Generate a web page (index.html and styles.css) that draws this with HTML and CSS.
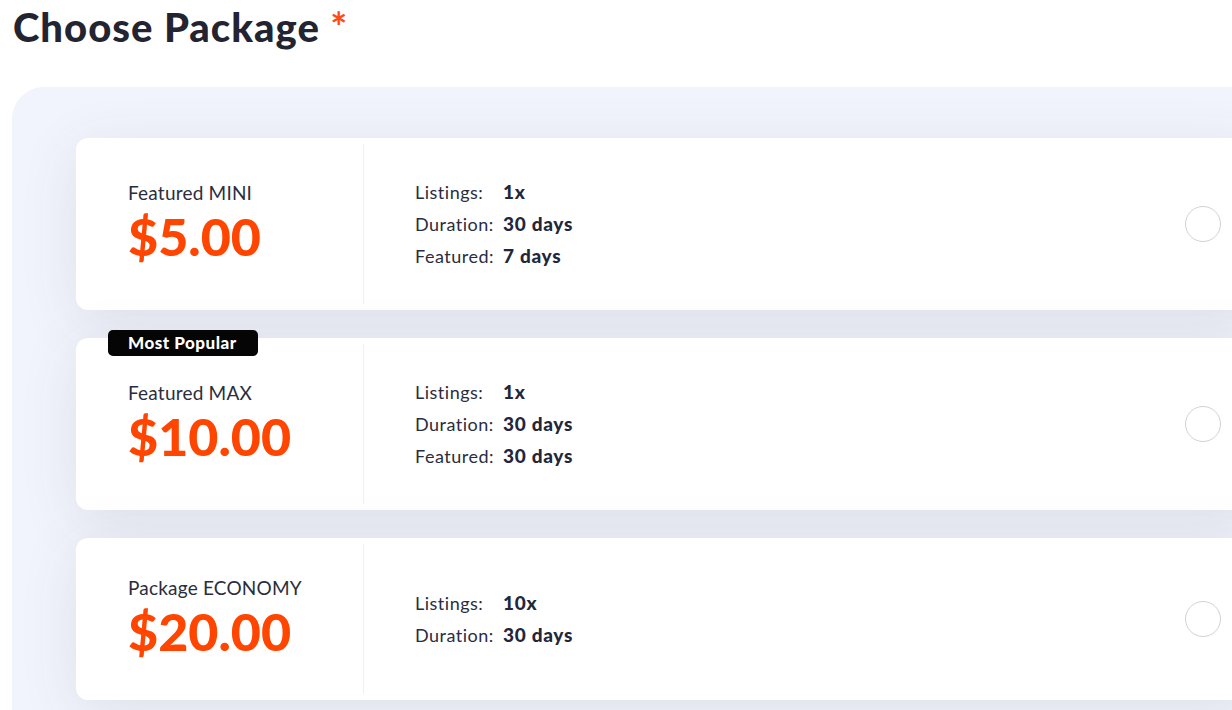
FILE: index.html
```html
<!DOCTYPE html>
<html>
<head>
<meta charset="utf-8">
<link rel="stylesheet" href="styles.css">
</head>
<body>
<h1 class="title">Choose Package <span class="req">*</span></h1>
<div class="packages">
  <div class="card">
    <div class="info">
      <div class="name">Featured MINI</div>
      <div class="price">$5.00</div>
    </div>
    <div class="details">
      <div class="label">Listings:</div><div class="value">1x</div>
      <div class="label">Duration:</div><div class="value">30 days</div>
      <div class="label">Featured:</div><div class="value">7 days</div>
    </div>
    <div class="radio"></div>
  </div>
  <div class="card">
    <div class="badge">Most Popular</div>
    <div class="info">
      <div class="name">Featured MAX</div>
      <div class="price">$10.00</div>
    </div>
    <div class="details">
      <div class="label">Listings:</div><div class="value">1x</div>
      <div class="label">Duration:</div><div class="value">30 days</div>
      <div class="label">Featured:</div><div class="value">30 days</div>
    </div>
    <div class="radio"></div>
  </div>
  <div class="card">
    <div class="info">
      <div class="name">Package ECONOMY</div>
      <div class="price">$20.00</div>
    </div>
    <div class="details">
      <div class="label">Listings:</div><div class="value">10x</div>
      <div class="label">Duration:</div><div class="value">30 days</div>
    </div>
    <div class="radio"></div>
  </div>
</div>
</body>
</html>
```
FILE: styles.css
```css
html, body {
  margin: 0;
  padding: 0;
  background: #ffffff;
  overflow: hidden;
  height: 710px;
}
body {
  font-family: Lato, "Noto Sans", sans-serif;
  color: #23263a;
}
.title {
  margin: 0;
  padding: 4px 0 0 13px;
  font-size: 40px;
  line-height: 46px;
  font-weight: 900;
  letter-spacing: 1px;
  color: #222531;
  height: 87px;
  box-sizing: border-box;
}
.req {
  color: #ff4a12;
  font-weight: 700;
  letter-spacing: 0;
}
.packages {
  margin-left: 12px;
  width: 1300px;
  box-sizing: border-box;
  padding: 51px 52px 40px 64px;
  background: #f1f4fc;
  border-radius: 32px;
  display: flex;
  flex-direction: column;
  gap: 28px;
  min-height: 700px;
}
.card {
  position: relative;
  display: flex;
  align-items: stretch;
  background: #ffffff;
  border-radius: 12px;
  padding: 6px 0;
  box-shadow: 0 12px 60px rgba(70, 70, 80, 0.11);
}
.info {
  width: 288px;
  box-sizing: border-box;
  padding: 32px 0 32px 52px;
  border-right: 1px solid #eef0f8;
  display: flex;
  flex-direction: column;
  justify-content: center;
}
.name {
  font-size: 19px;
  line-height: 24px;
  letter-spacing: 0.2px;
  color: #2a2d3e;
}
.price {
  font-size: 52px;
  line-height: 62px;
  font-weight: 900;
  color: #ff4500;
}
.details {
  flex: 1;
  padding: 32px 0 32px 51px;
  display: grid;
  grid-template-columns: 88px auto;
  grid-auto-rows: 32px;
  align-content: center;
  font-size: 18px;
  line-height: 32px;
  color: #2a2d3e;
}
.label {
  letter-spacing: 0.5px;
}
.value {
  font-size: 19px;
  font-weight: 900;
  letter-spacing: 0.7px;
  color: #23263a;
}
.radio {
  align-self: center;
  width: 34px;
  height: 34px;
  border: 1px solid #d2d2d6;
  border-radius: 50%;
  margin-right: 39px;
}
.badge {
  position: absolute;
  left: 32px;
  top: -8px;
  height: 26px;
  padding: 0 21px 0 20px;
  background: #050505;
  color: #ffffff;
  border-radius: 5px;
  font-size: 17px;
  line-height: 26px;
  font-weight: 900;
  letter-spacing: 0.5px;
}
```
